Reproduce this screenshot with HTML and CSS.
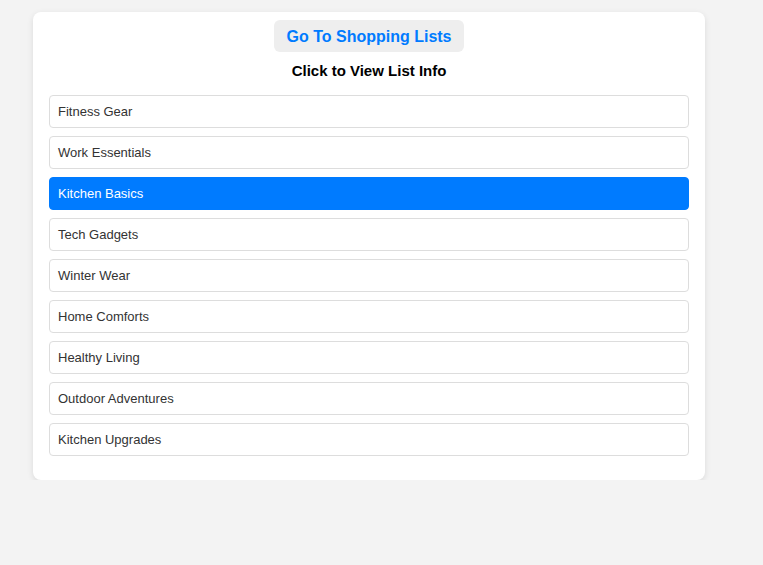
FILE: index.html
```html
<!DOCTYPE html>
<html>
<head>
<meta charset="utf-8">
<link rel="stylesheet" href="styles.css">
</head>
<body>
<div class="card">
  <div class="head">
    <button class="go-btn">Go To Shopping Lists</button>
    <h3 class="title">Click to View List Info</h3>
  </div>
  <ul class="lists">
    <li class="item">Fitness Gear</li>
    <li class="item">Work Essentials</li>
    <li class="item active">Kitchen Basics</li>
    <li class="item">Tech Gadgets</li>
    <li class="item">Winter Wear</li>
    <li class="item">Home Comforts</li>
    <li class="item">Healthy Living</li>
    <li class="item">Outdoor Adventures</li>
    <li class="item">Kitchen Upgrades</li>
  </ul>
</div>
</body>
</html>
```
FILE: styles.css
```css
html, body {
  margin: 0;
  padding: 0;
  background: #f3f3f3;
  font-family: "Liberation Sans", Arial, sans-serif;
}
body {
  padding: 12px 0 0 33px;
}
.card {
  width: 672px;
  box-sizing: border-box;
  background: #fff;
  border-radius: 8px;
  box-shadow: 0 2px 6px rgba(0,0,0,0.1);
  padding: 8px 16px 24px;
}
.head {
  display: flex;
  flex-direction: column;
  align-items: center;
}
.go-btn {
  font-family: inherit;
  font-size: 16px;
  font-weight: bold;
  color: #007bff;
  background: #eeeeee;
  border: none;
  border-radius: 6px;
  height: 32px;
  padding: 2px 12px 0;
}
.title {
  margin: 10px 0 0;
  font-size: 15px;
  font-weight: bold;
  color: #000;
  line-height: 18px;
}
.lists {
  list-style: none;
  margin: 15px 0 0;
  padding: 0;
  display: flex;
  flex-direction: column;
  gap: 8px;
}
.item {
  border: 1px solid #dddddd;
  border-radius: 4px;
  height: 31px;
  line-height: 31px;
  padding: 0 8px;
  font-size: 13px;
  color: #333;
}
.item.active {
  background: #007bff;
  border-color: #007bff;
  color: #fff;
}
```
